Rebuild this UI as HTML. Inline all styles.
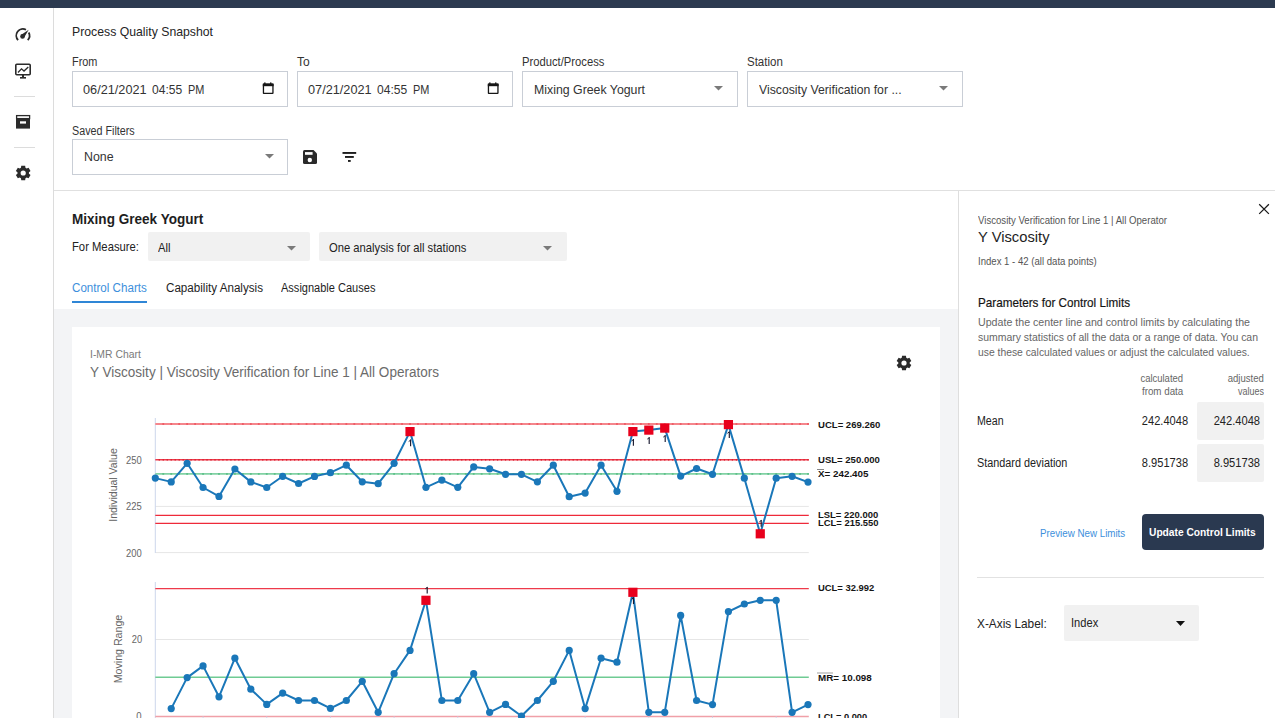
<!DOCTYPE html>
<html><head><meta charset="utf-8"><style>
html,body{margin:0;padding:0;width:1275px;height:718px;overflow:hidden;background:#fff;}
body{position:relative;font-family:"Liberation Sans",sans-serif;}
.t{position:absolute;white-space:nowrap;}
.r{position:absolute;}
svg{position:absolute;left:0;top:0;}
</style></head><body>
<div class="r" style="left:0px;top:0px;width:1275px;height:8px;background:#2c3a50;"></div>
<div class="r" style="left:53px;top:8px;width:1px;height:710px;background:#dcdcdc;"></div>
<div class="r" style="left:54px;top:190px;width:1221px;height:1px;background:#e0e0e0;"></div>
<div class="t" id="t0" style="left:72.00px;top:24.70px;font-size:13px;line-height:13px;color:#252525;transform:scaleX(0.9426512065183328);transform-origin:left top;">Process Quality Snapshot</div>
<div class="t" id="t1" style="left:72.00px;top:55.64px;font-size:12px;line-height:12px;color:#333;transform:scaleX(0.9071428571428571);transform-origin:left top;">From</div>
<div class="t" id="t2" style="left:297.00px;top:55.64px;font-size:12px;line-height:12px;color:#333;">To</div>
<div class="t" id="t3" style="left:522.00px;top:55.64px;font-size:12px;line-height:12px;color:#333;transform:scaleX(0.9358651286601598);transform-origin:left top;">Product/Process</div>
<div class="t" id="t4" style="left:747.00px;top:55.64px;font-size:12px;line-height:12px;color:#333;transform:scaleX(0.9582601421999163);transform-origin:left top;">Station</div>
<div class="r" style="left:72px;top:71px;width:216px;height:36px;background:#fff;box-sizing:border-box;border:1px solid #c9ced6;"></div>
<div class="r" style="left:297px;top:71px;width:216px;height:36px;background:#fff;box-sizing:border-box;border:1px solid #c9ced6;"></div>
<div class="r" style="left:522px;top:71px;width:216px;height:36px;background:#fff;box-sizing:border-box;border:1px solid #c9ced6;"></div>
<div class="r" style="left:747px;top:71px;width:216px;height:36px;background:#fff;box-sizing:border-box;border:1px solid #c9ced6;"></div>
<div class="t" id="t5" style="left:82.60px;top:82.70px;font-size:13px;line-height:13px;color:#333;transform:scaleX(0.9772869147659063);transform-origin:left top;">06/21/2021</div>
<div class="t" id="t6" style="left:152.20px;top:82.70px;font-size:13px;line-height:13px;color:#333;transform:scaleX(0.927892462794047);transform-origin:left top;">04:55</div>
<div class="t" id="t7" style="left:188.00px;top:82.70px;font-size:13px;line-height:13px;color:#333;transform:scaleX(0.8410256410256409);transform-origin:left top;">PM</div>
<div class="t" id="t8" style="left:307.60px;top:82.70px;font-size:13px;line-height:13px;color:#333;transform:scaleX(0.9772869147659063);transform-origin:left top;">07/21/2021</div>
<div class="t" id="t9" style="left:377.20px;top:82.70px;font-size:13px;line-height:13px;color:#333;transform:scaleX(0.927892462794047);transform-origin:left top;">04:55</div>
<div class="t" id="t10" style="left:413.00px;top:82.70px;font-size:13px;line-height:13px;color:#333;transform:scaleX(0.8410256410256409);transform-origin:left top;">PM</div>
<div class="t" id="t11" style="left:534.00px;top:82.70px;font-size:13px;line-height:13px;color:#333;transform:scaleX(0.9480848792206059);transform-origin:left top;">Mixing Greek Yogurt</div>
<div class="t" id="t12" style="left:759.00px;top:82.70px;font-size:13px;line-height:13px;color:#333;transform:scaleX(0.9412541254125412);transform-origin:left top;">Viscosity Verification for ...</div>
<svg width="14" height="14" style="left:262px;top:81px" viewBox="0 0 14 14"><rect x="1.45" y="3.25" width="9.5" height="9.05" rx="0.4" fill="none" stroke="#161616" stroke-width="1.3"/><rect x="0.8" y="2.6" width="10.8" height="2.6" fill="#161616"/><rect x="2.2" y="1.4" width="1.3" height="1.6" fill="#161616"/><rect x="8.1" y="1.4" width="1.3" height="1.6" fill="#161616"/></svg>
<svg width="14" height="14" style="left:487px;top:81px" viewBox="0 0 14 14"><rect x="1.45" y="3.25" width="9.5" height="9.05" rx="0.4" fill="none" stroke="#161616" stroke-width="1.3"/><rect x="0.8" y="2.6" width="10.8" height="2.6" fill="#161616"/><rect x="2.2" y="1.4" width="1.3" height="1.6" fill="#161616"/><rect x="8.1" y="1.4" width="1.3" height="1.6" fill="#161616"/></svg>
<svg width="9" height="5.5" style="left:714px;top:86px"><path d="M0 0 L9 0 L4.5 4.5 Z" fill="#7a7a7a"/></svg>
<svg width="9" height="5.5" style="left:939px;top:86px"><path d="M0 0 L9 0 L4.5 4.5 Z" fill="#7a7a7a"/></svg>
<div class="t" id="t13" style="left:72.00px;top:124.84px;font-size:12px;line-height:12px;color:#333;transform:scaleX(0.8953145917001339);transform-origin:left top;">Saved Filters</div>
<div class="r" style="left:72px;top:139px;width:216px;height:36px;background:#fff;box-sizing:border-box;border:1px solid #c9ced6;"></div>
<div class="t" id="t14" style="left:84.00px;top:150.40px;font-size:13px;line-height:13px;color:#333;transform:scaleX(0.9524384112619407);transform-origin:left top;">None</div>
<svg width="9" height="5.5" style="left:264.5px;top:154px"><path d="M0 0 L9 0 L4.5 4.5 Z" fill="#7a7a7a"/></svg>
<svg width="16" height="16" style="left:302px;top:149px" viewBox="0 0 16 16"><path d="M1 2.5 Q1 1 2.5 1 H11.5 L15 4.5 V13.5 Q15 15 13.5 15 H2.5 Q1 15 1 13.5 Z" fill="#2a2a2a"/><rect x="3" y="3.1" width="7.6" height="2.7" fill="#fff"/><circle cx="7.8" cy="11" r="2.2" fill="#fff"/></svg>
<svg width="16" height="14" style="left:341px;top:151px" viewBox="0 0 16 14"><rect x="1.5" y="1" width="13.7" height="1.9" fill="#1e1e1e"/><rect x="4" y="5" width="8.8" height="1.9" fill="#1e1e1e"/><rect x="7" y="9" width="2.7" height="1.9" fill="#1e1e1e"/></svg>
<svg width="54" height="182" style="left:0;top:8px" viewBox="0 8 54 182"><path d="M18.07 40.10 A6.6 6.6 0 0 1 26.00 29.77 M28.73 32.50 A6.6 6.6 0 0 1 27.73 40.10" fill="none" stroke="#2b2b2b" stroke-width="1.8"/><path d="M24.01 37.82 L28.70 29.80 L20.99 34.98 Z" fill="#2b2b2b"/><circle cx="22.5" cy="36.4" r="2.3" fill="#2b2b2b"/><rect x="15.8" y="64.2" width="14.4" height="10.6" rx="1" fill="none" stroke="#2b2b2b" stroke-width="1.6"/><polyline points="18,72.5 21.5,68.8 24,71 28.3,67" fill="none" stroke="#2b2b2b" stroke-width="1.3"/><rect x="22" y="75" width="2" height="2.5" fill="#2b2b2b"/><rect x="20" y="77" width="6" height="1.6" fill="#2b2b2b"/><rect x="14" y="96" width="21" height="1" fill="#dcdcdc"/><rect x="14" y="147" width="21" height="1" fill="#dcdcdc"/><rect x="16.6" y="115.6" width="13" height="3" fill="none" stroke="#2b2b2b" stroke-width="1.3"/><rect x="16" y="119" width="14" height="9.6" fill="#2b2b2b"/><rect x="20" y="121.3" width="6" height="2.3" fill="#fff"/></svg>
<svg width="54" height="30" style="left:0;top:158px" viewBox="0 158 54 30"><path d="M30.54,174.98 L28.58,178.36 L26.68,177.61 L25.45,178.32 L25.15,180.34 L21.25,180.34 L20.95,178.32 L19.72,177.61 L17.82,178.36 L15.86,174.98 L17.47,173.71 L17.47,172.29 L15.86,171.02 L17.82,167.64 L19.72,168.39 L20.95,167.68 L21.25,165.66 L25.15,165.66 L25.45,167.68 L26.68,168.39 L28.58,167.64 L30.54,171.02 L28.93,172.29 L28.93,173.71 Z" fill="#2b2b2b"/><circle cx="23.2" cy="173" r="2.6" fill="#fff"/></svg>
<div class="r" style="left:54px;top:309px;width:904px;height:409px;background:#f3f4f6;"></div>
<div class="r" style="left:72px;top:327px;width:868px;height:391px;background:#fff;"></div>
<div class="t" id="t15" style="left:72.00px;top:211.95px;font-size:14px;line-height:14px;color:#1e1e1e;font-weight:700;transform:scaleX(0.9681105990783411);transform-origin:left top;">Mixing Greek Yogurt</div>
<div class="t" id="t16" style="left:72.00px;top:240.00px;font-size:13px;line-height:13px;color:#222;transform:scaleX(0.8653193209377527);transform-origin:left top;">For Measure:</div>
<div class="r" style="left:148px;top:232px;width:162px;height:29px;background:#f1f1f1;border-radius:2px;"></div>
<div class="t" id="t17" style="left:157.60px;top:241.00px;font-size:13px;line-height:13px;color:#222;transform:scaleX(0.8648648648648649);transform-origin:left top;">All</div>
<svg width="9" height="5.5" style="left:287px;top:246px"><path d="M0 0 L9 0 L4.5 4.5 Z" fill="#7a7a7a"/></svg>
<div class="r" style="left:319px;top:232px;width:248px;height:29px;background:#f1f1f1;border-radius:2px;"></div>
<div class="t" id="t18" style="left:328.70px;top:240.80px;font-size:13px;line-height:13px;color:#222;transform:scaleX(0.8636917633182624);transform-origin:left top;">One analysis for all stations</div>
<svg width="9" height="5.5" style="left:543px;top:246px"><path d="M0 0 L9 0 L4.5 4.5 Z" fill="#7a7a7a"/></svg>
<div class="t" id="t19" style="left:72.00px;top:281.84px;font-size:12px;line-height:12px;color:#3d8fdc;transform:scaleX(0.9667205169628432);transform-origin:left top;">Control Charts</div>
<div class="t" id="t20" style="left:165.50px;top:281.84px;font-size:12px;line-height:12px;color:#1e1e1e;transform:scaleX(0.9693941286695815);transform-origin:left top;">Capability Analysis</div>
<div class="t" id="t21" style="left:281.00px;top:281.84px;font-size:12px;line-height:12px;color:#1e1e1e;transform:scaleX(0.918874524714829);transform-origin:left top;">Assignable Causes</div>
<div class="r" style="left:72px;top:301px;width:75px;height:2px;background:#2f86d6;"></div>
<div class="t" id="t22" style="left:89.80px;top:348.99px;font-size:11px;line-height:11px;color:#7a7a7a;transform:scaleX(0.9445671121441022);transform-origin:left top;">I-MR Chart</div>
<div class="t" id="t23" style="left:89.80px;top:365.25px;font-size:14px;line-height:14px;color:#6b6b6b;transform:scaleX(0.9658810810810811);transform-origin:left top;">Y Viscosity | Viscosity Verification for Line 1 | All Operators</div>
<svg width="20" height="20" style="left:894px;top:353px" viewBox="894 353 20 20"><path d="M911.34,364.98 L909.38,368.36 L907.48,367.61 L906.25,368.32 L905.95,370.34 L902.05,370.34 L901.75,368.32 L900.52,367.61 L898.62,368.36 L896.66,364.98 L898.27,363.71 L898.27,362.29 L896.66,361.02 L898.62,357.64 L900.52,358.39 L901.75,357.68 L902.05,355.66 L905.95,355.66 L906.25,357.68 L907.48,358.39 L909.38,357.64 L911.34,361.02 L909.73,362.29 L909.73,363.71 Z" fill="#2b2b2b"/><circle cx="904" cy="363" r="2.6" fill="#fff"/></svg>
<div class="r" style="left:958px;top:191px;width:1px;height:527px;background:#dedede;"></div>
<svg width="14" height="14" style="left:1257px;top:202px" viewBox="0 0 14 14"><path d="M2.2 2.2 L11.9 11.9 M11.9 2.2 L2.2 11.9" stroke="#1a1a1a" stroke-width="1.25"/></svg>
<div class="t" id="t24" style="left:977.60px;top:215.31px;font-size:10.5px;line-height:10.5px;color:#555;transform:scaleX(0.9165025003788453);transform-origin:left top;">Viscosity Verification for Line 1 | All Operator</div>
<div class="t" id="t25" style="left:977.60px;top:229.30px;font-size:15px;line-height:15px;color:#1e1e1e;transform:scaleX(0.9819742489270387);transform-origin:left top;">Y Viscosity</div>
<div class="t" id="t26" style="left:977.60px;top:256.09px;font-size:11px;line-height:11px;color:#555;transform:scaleX(0.8712272258508078);transform-origin:left top;">Index 1 - 42 (all data points)</div>
<div class="t" id="t27" style="left:977.60px;top:296.40px;font-size:13px;line-height:13px;color:#141414;transform:scaleX(0.8990757855822551);transform-origin:left top;-webkit-text-stroke:0.2px #141414;">Parameters for Control Limits</div>
<div class="t" id="t28" style="left:977.60px;top:317.27px;font-size:11.5px;line-height:11.5px;color:#666;transform:scaleX(0.9249734325185972);transform-origin:left top;">Update the center line and control limits by calculating the</div>
<div class="t" id="t29" style="left:977.60px;top:332.27px;font-size:11.5px;line-height:11.5px;color:#666;transform:scaleX(0.9087221095334685);transform-origin:left top;">summary statistics of all the data or a range of data. You can</div>
<div class="t" id="t30" style="left:977.60px;top:347.27px;font-size:11.5px;line-height:11.5px;color:#666;transform:scaleX(0.8985066914690228);transform-origin:left top;">use these calculated values or adjust the calculated values.</div>
<div class="t" id="t31" style="right:92.00px;top:374.24px;font-size:10px;line-height:10px;color:#666;transform:scaleX(0.9460097154753644);transform-origin:right top;">calculated</div>
<div class="t" id="t32" style="right:92.00px;top:386.94px;font-size:10px;line-height:10px;color:#666;transform:scaleX(0.9775147928994082);transform-origin:right top;">from data</div>
<div class="t" id="t33" style="right:11.00px;top:374.24px;font-size:10px;line-height:10px;color:#666;transform:scaleX(0.9547107438016529);transform-origin:right top;">adjusted</div>
<div class="t" id="t34" style="right:11.00px;top:386.94px;font-size:10px;line-height:10px;color:#666;transform:scaleX(0.8994594594594595);transform-origin:right top;">values</div>
<div class="r" style="left:1197px;top:402px;width:67px;height:38px;background:#f1f1f1;border-radius:2px;"></div>
<div class="r" style="left:1197px;top:444px;width:67px;height:38px;background:#f1f1f1;border-radius:2px;"></div>
<div class="t" id="t35" style="left:977.40px;top:415.14px;font-size:12px;line-height:12px;color:#222;transform:scaleX(0.8857440166493237);transform-origin:left top;">Mean</div>
<div class="t" id="t36" style="left:977.40px;top:457.24px;font-size:12px;line-height:12px;color:#222;transform:scaleX(0.9032943013270883);transform-origin:left top;">Standard deviation</div>
<div class="t" id="t37" style="right:87.00px;top:415.14px;font-size:12px;line-height:12px;color:#222;transform:scaleX(0.9228464419475656);transform-origin:right top;">242.4048</div>
<div class="t" id="t38" style="right:15.00px;top:415.14px;font-size:12px;line-height:12px;color:#222;transform:scaleX(0.9268414481897628);transform-origin:right top;">242.4048</div>
<div class="t" id="t39" style="right:87.00px;top:457.24px;font-size:12px;line-height:12px;color:#222;transform:scaleX(0.9228464419475656);transform-origin:right top;">8.951738</div>
<div class="t" id="t40" style="right:15.00px;top:457.24px;font-size:12px;line-height:12px;color:#222;transform:scaleX(0.9268414481897628);transform-origin:right top;">8.951738</div>
<div class="r" style="left:1142px;top:514px;width:122px;height:36px;background:#2a3950;border-radius:4px;"></div>
<div class="t" id="t41" style="left:1149.30px;top:527.29px;font-size:11px;line-height:11px;color:#fff;font-weight:700;transform:scaleX(0.9287093703250374);transform-origin:left top;">Update Control Limits</div>
<div class="t" id="t42" style="left:1040.40px;top:528.09px;font-size:11px;line-height:11px;color:#3d8fdc;transform:scaleX(0.8877889938130902);transform-origin:left top;">Preview New Limits</div>
<div class="r" style="left:977px;top:577px;width:287px;height:1px;background:#e2e2e2;"></div>
<div class="t" id="t43" style="left:977.00px;top:617.40px;font-size:13px;line-height:13px;color:#222;transform:scaleX(0.9099959200326397);transform-origin:left top;">X-Axis Label:</div>
<div class="r" style="left:1064px;top:605px;width:135px;height:36px;background:#f1f1f1;border-radius:2px;"></div>
<div class="t" id="t44" style="left:1071.00px;top:617.04px;font-size:12px;line-height:12px;color:#222;transform:scaleX(0.9264502394890899);transform-origin:left top;">Index</div>
<svg width="9" height="6" style="left:1176px;top:620.5px"><path d="M0 0 L9 0 L4.5 5 Z" fill="#111"/></svg>
<svg width="1275" height="718" viewBox="0 0 1275 718" style="left:0;top:0"><line x1="155.3" y1="506.4" x2="808.8" y2="506.4" stroke="#e6e6e6" stroke-width="1"/><line x1="155.3" y1="552.6" x2="808.8" y2="552.6" stroke="#e6e6e6" stroke-width="1"/><line x1="155.3" y1="418" x2="155.3" y2="553" stroke="#ccd6eb" stroke-width="1"/><line x1="155.3" y1="424" x2="808.8" y2="424" stroke="#f5868c" stroke-width="1.8"/><line x1="155.3" y1="459.8" x2="808.8" y2="459.8" stroke="#ee3a4a" stroke-width="1.4"/><line x1="155.3" y1="473.9" x2="808.8" y2="473.9" stroke="#82d2a4" stroke-width="1.6"/><line x1="155.3" y1="515.4" x2="808.8" y2="515.4" stroke="#ee2a3a" stroke-width="1.2"/><line x1="155.3" y1="523.4" x2="808.8" y2="523.4" stroke="#ee2a3a" stroke-width="1.2"/><rect x="162.36" y="423.10" width="1.8" height="1.8" fill="#ee5a64"/><rect x="170.32" y="423.10" width="1.8" height="1.8" fill="#ee5a64"/><rect x="178.28" y="423.10" width="1.8" height="1.8" fill="#ee5a64"/><rect x="186.24" y="423.10" width="1.8" height="1.8" fill="#ee5a64"/><rect x="194.20" y="423.10" width="1.8" height="1.8" fill="#ee5a64"/><rect x="202.16" y="423.10" width="1.8" height="1.8" fill="#ee5a64"/><rect x="210.12" y="423.10" width="1.8" height="1.8" fill="#ee5a64"/><rect x="218.08" y="423.10" width="1.8" height="1.8" fill="#ee5a64"/><rect x="226.04" y="423.10" width="1.8" height="1.8" fill="#ee5a64"/><rect x="234.00" y="423.10" width="1.8" height="1.8" fill="#ee5a64"/><rect x="241.96" y="423.10" width="1.8" height="1.8" fill="#ee5a64"/><rect x="249.92" y="423.10" width="1.8" height="1.8" fill="#ee5a64"/><rect x="257.88" y="423.10" width="1.8" height="1.8" fill="#ee5a64"/><rect x="265.84" y="423.10" width="1.8" height="1.8" fill="#ee5a64"/><rect x="273.80" y="423.10" width="1.8" height="1.8" fill="#ee5a64"/><rect x="281.76" y="423.10" width="1.8" height="1.8" fill="#ee5a64"/><rect x="289.72" y="423.10" width="1.8" height="1.8" fill="#ee5a64"/><rect x="297.68" y="423.10" width="1.8" height="1.8" fill="#ee5a64"/><rect x="305.64" y="423.10" width="1.8" height="1.8" fill="#ee5a64"/><rect x="313.60" y="423.10" width="1.8" height="1.8" fill="#ee5a64"/><rect x="321.56" y="423.10" width="1.8" height="1.8" fill="#ee5a64"/><rect x="329.52" y="423.10" width="1.8" height="1.8" fill="#ee5a64"/><rect x="337.48" y="423.10" width="1.8" height="1.8" fill="#ee5a64"/><rect x="345.44" y="423.10" width="1.8" height="1.8" fill="#ee5a64"/><rect x="353.40" y="423.10" width="1.8" height="1.8" fill="#ee5a64"/><rect x="361.36" y="423.10" width="1.8" height="1.8" fill="#ee5a64"/><rect x="369.32" y="423.10" width="1.8" height="1.8" fill="#ee5a64"/><rect x="377.28" y="423.10" width="1.8" height="1.8" fill="#ee5a64"/><rect x="385.24" y="423.10" width="1.8" height="1.8" fill="#ee5a64"/><rect x="393.20" y="423.10" width="1.8" height="1.8" fill="#ee5a64"/><rect x="401.16" y="423.10" width="1.8" height="1.8" fill="#ee5a64"/><rect x="409.12" y="423.10" width="1.8" height="1.8" fill="#ee5a64"/><rect x="417.08" y="423.10" width="1.8" height="1.8" fill="#ee5a64"/><rect x="425.04" y="423.10" width="1.8" height="1.8" fill="#ee5a64"/><rect x="433.00" y="423.10" width="1.8" height="1.8" fill="#ee5a64"/><rect x="440.96" y="423.10" width="1.8" height="1.8" fill="#ee5a64"/><rect x="448.92" y="423.10" width="1.8" height="1.8" fill="#ee5a64"/><rect x="456.88" y="423.10" width="1.8" height="1.8" fill="#ee5a64"/><rect x="464.84" y="423.10" width="1.8" height="1.8" fill="#ee5a64"/><rect x="472.80" y="423.10" width="1.8" height="1.8" fill="#ee5a64"/><rect x="480.76" y="423.10" width="1.8" height="1.8" fill="#ee5a64"/><rect x="488.72" y="423.10" width="1.8" height="1.8" fill="#ee5a64"/><rect x="496.68" y="423.10" width="1.8" height="1.8" fill="#ee5a64"/><rect x="504.64" y="423.10" width="1.8" height="1.8" fill="#ee5a64"/><rect x="512.60" y="423.10" width="1.8" height="1.8" fill="#ee5a64"/><rect x="520.56" y="423.10" width="1.8" height="1.8" fill="#ee5a64"/><rect x="528.52" y="423.10" width="1.8" height="1.8" fill="#ee5a64"/><rect x="536.48" y="423.10" width="1.8" height="1.8" fill="#ee5a64"/><rect x="544.44" y="423.10" width="1.8" height="1.8" fill="#ee5a64"/><rect x="552.40" y="423.10" width="1.8" height="1.8" fill="#ee5a64"/><rect x="560.36" y="423.10" width="1.8" height="1.8" fill="#ee5a64"/><rect x="568.32" y="423.10" width="1.8" height="1.8" fill="#ee5a64"/><rect x="576.28" y="423.10" width="1.8" height="1.8" fill="#ee5a64"/><rect x="584.24" y="423.10" width="1.8" height="1.8" fill="#ee5a64"/><rect x="592.20" y="423.10" width="1.8" height="1.8" fill="#ee5a64"/><rect x="600.16" y="423.10" width="1.8" height="1.8" fill="#ee5a64"/><rect x="608.12" y="423.10" width="1.8" height="1.8" fill="#ee5a64"/><rect x="616.08" y="423.10" width="1.8" height="1.8" fill="#ee5a64"/><rect x="624.04" y="423.10" width="1.8" height="1.8" fill="#ee5a64"/><rect x="632.00" y="423.10" width="1.8" height="1.8" fill="#ee5a64"/><rect x="639.96" y="423.10" width="1.8" height="1.8" fill="#ee5a64"/><rect x="647.92" y="423.10" width="1.8" height="1.8" fill="#ee5a64"/><rect x="655.88" y="423.10" width="1.8" height="1.8" fill="#ee5a64"/><rect x="663.84" y="423.10" width="1.8" height="1.8" fill="#ee5a64"/><rect x="671.80" y="423.10" width="1.8" height="1.8" fill="#ee5a64"/><rect x="679.76" y="423.10" width="1.8" height="1.8" fill="#ee5a64"/><rect x="687.72" y="423.10" width="1.8" height="1.8" fill="#ee5a64"/><rect x="695.68" y="423.10" width="1.8" height="1.8" fill="#ee5a64"/><rect x="703.64" y="423.10" width="1.8" height="1.8" fill="#ee5a64"/><rect x="711.60" y="423.10" width="1.8" height="1.8" fill="#ee5a64"/><rect x="719.56" y="423.10" width="1.8" height="1.8" fill="#ee5a64"/><rect x="727.52" y="423.10" width="1.8" height="1.8" fill="#ee5a64"/><rect x="735.48" y="423.10" width="1.8" height="1.8" fill="#ee5a64"/><rect x="743.44" y="423.10" width="1.8" height="1.8" fill="#ee5a64"/><rect x="751.40" y="423.10" width="1.8" height="1.8" fill="#ee5a64"/><rect x="759.36" y="423.10" width="1.8" height="1.8" fill="#ee5a64"/><rect x="767.32" y="423.10" width="1.8" height="1.8" fill="#ee5a64"/><rect x="775.28" y="423.10" width="1.8" height="1.8" fill="#ee5a64"/><rect x="783.24" y="423.10" width="1.8" height="1.8" fill="#ee5a64"/><rect x="791.20" y="423.10" width="1.8" height="1.8" fill="#ee5a64"/><rect x="799.16" y="423.10" width="1.8" height="1.8" fill="#ee5a64"/><rect x="807.12" y="423.10" width="1.8" height="1.8" fill="#ee5a64"/><rect x="158.68" y="459.00" width="1.2" height="1.6" fill="#d82030"/><rect x="162.66" y="459.00" width="1.2" height="1.6" fill="#d82030"/><rect x="166.64" y="459.00" width="1.2" height="1.6" fill="#d82030"/><rect x="170.62" y="459.00" width="1.2" height="1.6" fill="#d82030"/><rect x="174.60" y="459.00" width="1.2" height="1.6" fill="#d82030"/><rect x="178.58" y="459.00" width="1.2" height="1.6" fill="#d82030"/><rect x="182.56" y="459.00" width="1.2" height="1.6" fill="#d82030"/><rect x="186.54" y="459.00" width="1.2" height="1.6" fill="#d82030"/><rect x="190.52" y="459.00" width="1.2" height="1.6" fill="#d82030"/><rect x="194.50" y="459.00" width="1.2" height="1.6" fill="#d82030"/><rect x="198.48" y="459.00" width="1.2" height="1.6" fill="#d82030"/><rect x="202.46" y="459.00" width="1.2" height="1.6" fill="#d82030"/><rect x="206.44" y="459.00" width="1.2" height="1.6" fill="#d82030"/><rect x="210.42" y="459.00" width="1.2" height="1.6" fill="#d82030"/><rect x="214.40" y="459.00" width="1.2" height="1.6" fill="#d82030"/><rect x="218.38" y="459.00" width="1.2" height="1.6" fill="#d82030"/><rect x="222.36" y="459.00" width="1.2" height="1.6" fill="#d82030"/><rect x="226.34" y="459.00" width="1.2" height="1.6" fill="#d82030"/><rect x="230.32" y="459.00" width="1.2" height="1.6" fill="#d82030"/><rect x="234.30" y="459.00" width="1.2" height="1.6" fill="#d82030"/><rect x="238.28" y="459.00" width="1.2" height="1.6" fill="#d82030"/><rect x="242.26" y="459.00" width="1.2" height="1.6" fill="#d82030"/><rect x="246.24" y="459.00" width="1.2" height="1.6" fill="#d82030"/><rect x="250.22" y="459.00" width="1.2" height="1.6" fill="#d82030"/><rect x="254.20" y="459.00" width="1.2" height="1.6" fill="#d82030"/><rect x="258.18" y="459.00" width="1.2" height="1.6" fill="#d82030"/><rect x="262.16" y="459.00" width="1.2" height="1.6" fill="#d82030"/><rect x="266.14" y="459.00" width="1.2" height="1.6" fill="#d82030"/><rect x="270.12" y="459.00" width="1.2" height="1.6" fill="#d82030"/><rect x="274.10" y="459.00" width="1.2" height="1.6" fill="#d82030"/><rect x="278.08" y="459.00" width="1.2" height="1.6" fill="#d82030"/><rect x="282.06" y="459.00" width="1.2" height="1.6" fill="#d82030"/><rect x="286.04" y="459.00" width="1.2" height="1.6" fill="#d82030"/><rect x="290.02" y="459.00" width="1.2" height="1.6" fill="#d82030"/><rect x="294.00" y="459.00" width="1.2" height="1.6" fill="#d82030"/><rect x="297.98" y="459.00" width="1.2" height="1.6" fill="#d82030"/><rect x="301.96" y="459.00" width="1.2" height="1.6" fill="#d82030"/><rect x="305.94" y="459.00" width="1.2" height="1.6" fill="#d82030"/><rect x="309.92" y="459.00" width="1.2" height="1.6" fill="#d82030"/><rect x="313.90" y="459.00" width="1.2" height="1.6" fill="#d82030"/><rect x="317.88" y="459.00" width="1.2" height="1.6" fill="#d82030"/><rect x="321.86" y="459.00" width="1.2" height="1.6" fill="#d82030"/><rect x="325.84" y="459.00" width="1.2" height="1.6" fill="#d82030"/><rect x="329.82" y="459.00" width="1.2" height="1.6" fill="#d82030"/><rect x="333.80" y="459.00" width="1.2" height="1.6" fill="#d82030"/><rect x="337.78" y="459.00" width="1.2" height="1.6" fill="#d82030"/><rect x="341.76" y="459.00" width="1.2" height="1.6" fill="#d82030"/><rect x="345.74" y="459.00" width="1.2" height="1.6" fill="#d82030"/><rect x="349.72" y="459.00" width="1.2" height="1.6" fill="#d82030"/><rect x="353.70" y="459.00" width="1.2" height="1.6" fill="#d82030"/><rect x="357.68" y="459.00" width="1.2" height="1.6" fill="#d82030"/><rect x="361.66" y="459.00" width="1.2" height="1.6" fill="#d82030"/><rect x="365.64" y="459.00" width="1.2" height="1.6" fill="#d82030"/><rect x="369.62" y="459.00" width="1.2" height="1.6" fill="#d82030"/><rect x="373.60" y="459.00" width="1.2" height="1.6" fill="#d82030"/><rect x="377.58" y="459.00" width="1.2" height="1.6" fill="#d82030"/><rect x="381.56" y="459.00" width="1.2" height="1.6" fill="#d82030"/><rect x="385.54" y="459.00" width="1.2" height="1.6" fill="#d82030"/><rect x="389.52" y="459.00" width="1.2" height="1.6" fill="#d82030"/><rect x="393.50" y="459.00" width="1.2" height="1.6" fill="#d82030"/><rect x="397.48" y="459.00" width="1.2" height="1.6" fill="#d82030"/><rect x="401.46" y="459.00" width="1.2" height="1.6" fill="#d82030"/><rect x="405.44" y="459.00" width="1.2" height="1.6" fill="#d82030"/><rect x="409.42" y="459.00" width="1.2" height="1.6" fill="#d82030"/><rect x="413.40" y="459.00" width="1.2" height="1.6" fill="#d82030"/><rect x="417.38" y="459.00" width="1.2" height="1.6" fill="#d82030"/><rect x="421.36" y="459.00" width="1.2" height="1.6" fill="#d82030"/><rect x="425.34" y="459.00" width="1.2" height="1.6" fill="#d82030"/><rect x="429.32" y="459.00" width="1.2" height="1.6" fill="#d82030"/><rect x="433.30" y="459.00" width="1.2" height="1.6" fill="#d82030"/><rect x="437.28" y="459.00" width="1.2" height="1.6" fill="#d82030"/><rect x="441.26" y="459.00" width="1.2" height="1.6" fill="#d82030"/><rect x="445.24" y="459.00" width="1.2" height="1.6" fill="#d82030"/><rect x="449.22" y="459.00" width="1.2" height="1.6" fill="#d82030"/><rect x="453.20" y="459.00" width="1.2" height="1.6" fill="#d82030"/><rect x="457.18" y="459.00" width="1.2" height="1.6" fill="#d82030"/><rect x="461.16" y="459.00" width="1.2" height="1.6" fill="#d82030"/><rect x="465.14" y="459.00" width="1.2" height="1.6" fill="#d82030"/><rect x="469.12" y="459.00" width="1.2" height="1.6" fill="#d82030"/><rect x="473.10" y="459.00" width="1.2" height="1.6" fill="#d82030"/><rect x="477.08" y="459.00" width="1.2" height="1.6" fill="#d82030"/><rect x="481.06" y="459.00" width="1.2" height="1.6" fill="#d82030"/><rect x="485.04" y="459.00" width="1.2" height="1.6" fill="#d82030"/><rect x="489.02" y="459.00" width="1.2" height="1.6" fill="#d82030"/><rect x="493.00" y="459.00" width="1.2" height="1.6" fill="#d82030"/><rect x="496.98" y="459.00" width="1.2" height="1.6" fill="#d82030"/><rect x="500.96" y="459.00" width="1.2" height="1.6" fill="#d82030"/><rect x="504.94" y="459.00" width="1.2" height="1.6" fill="#d82030"/><rect x="508.92" y="459.00" width="1.2" height="1.6" fill="#d82030"/><rect x="512.90" y="459.00" width="1.2" height="1.6" fill="#d82030"/><rect x="516.88" y="459.00" width="1.2" height="1.6" fill="#d82030"/><rect x="520.86" y="459.00" width="1.2" height="1.6" fill="#d82030"/><rect x="524.84" y="459.00" width="1.2" height="1.6" fill="#d82030"/><rect x="528.82" y="459.00" width="1.2" height="1.6" fill="#d82030"/><rect x="532.80" y="459.00" width="1.2" height="1.6" fill="#d82030"/><rect x="536.78" y="459.00" width="1.2" height="1.6" fill="#d82030"/><rect x="540.76" y="459.00" width="1.2" height="1.6" fill="#d82030"/><rect x="544.74" y="459.00" width="1.2" height="1.6" fill="#d82030"/><rect x="548.72" y="459.00" width="1.2" height="1.6" fill="#d82030"/><rect x="552.70" y="459.00" width="1.2" height="1.6" fill="#d82030"/><rect x="556.68" y="459.00" width="1.2" height="1.6" fill="#d82030"/><rect x="560.66" y="459.00" width="1.2" height="1.6" fill="#d82030"/><rect x="564.64" y="459.00" width="1.2" height="1.6" fill="#d82030"/><rect x="568.62" y="459.00" width="1.2" height="1.6" fill="#d82030"/><rect x="572.60" y="459.00" width="1.2" height="1.6" fill="#d82030"/><rect x="576.58" y="459.00" width="1.2" height="1.6" fill="#d82030"/><rect x="580.56" y="459.00" width="1.2" height="1.6" fill="#d82030"/><rect x="584.54" y="459.00" width="1.2" height="1.6" fill="#d82030"/><rect x="588.52" y="459.00" width="1.2" height="1.6" fill="#d82030"/><rect x="592.50" y="459.00" width="1.2" height="1.6" fill="#d82030"/><rect x="596.48" y="459.00" width="1.2" height="1.6" fill="#d82030"/><rect x="600.46" y="459.00" width="1.2" height="1.6" fill="#d82030"/><rect x="604.44" y="459.00" width="1.2" height="1.6" fill="#d82030"/><rect x="608.42" y="459.00" width="1.2" height="1.6" fill="#d82030"/><rect x="612.40" y="459.00" width="1.2" height="1.6" fill="#d82030"/><rect x="616.38" y="459.00" width="1.2" height="1.6" fill="#d82030"/><rect x="620.36" y="459.00" width="1.2" height="1.6" fill="#d82030"/><rect x="624.34" y="459.00" width="1.2" height="1.6" fill="#d82030"/><rect x="628.32" y="459.00" width="1.2" height="1.6" fill="#d82030"/><rect x="632.30" y="459.00" width="1.2" height="1.6" fill="#d82030"/><rect x="636.28" y="459.00" width="1.2" height="1.6" fill="#d82030"/><rect x="640.26" y="459.00" width="1.2" height="1.6" fill="#d82030"/><rect x="644.24" y="459.00" width="1.2" height="1.6" fill="#d82030"/><rect x="648.22" y="459.00" width="1.2" height="1.6" fill="#d82030"/><rect x="652.20" y="459.00" width="1.2" height="1.6" fill="#d82030"/><rect x="656.18" y="459.00" width="1.2" height="1.6" fill="#d82030"/><rect x="660.16" y="459.00" width="1.2" height="1.6" fill="#d82030"/><rect x="664.14" y="459.00" width="1.2" height="1.6" fill="#d82030"/><rect x="668.12" y="459.00" width="1.2" height="1.6" fill="#d82030"/><rect x="672.10" y="459.00" width="1.2" height="1.6" fill="#d82030"/><rect x="676.08" y="459.00" width="1.2" height="1.6" fill="#d82030"/><rect x="680.06" y="459.00" width="1.2" height="1.6" fill="#d82030"/><rect x="684.04" y="459.00" width="1.2" height="1.6" fill="#d82030"/><rect x="688.02" y="459.00" width="1.2" height="1.6" fill="#d82030"/><rect x="692.00" y="459.00" width="1.2" height="1.6" fill="#d82030"/><rect x="695.98" y="459.00" width="1.2" height="1.6" fill="#d82030"/><rect x="699.96" y="459.00" width="1.2" height="1.6" fill="#d82030"/><rect x="703.94" y="459.00" width="1.2" height="1.6" fill="#d82030"/><rect x="707.92" y="459.00" width="1.2" height="1.6" fill="#d82030"/><rect x="711.90" y="459.00" width="1.2" height="1.6" fill="#d82030"/><rect x="715.88" y="459.00" width="1.2" height="1.6" fill="#d82030"/><rect x="719.86" y="459.00" width="1.2" height="1.6" fill="#d82030"/><rect x="723.84" y="459.00" width="1.2" height="1.6" fill="#d82030"/><rect x="727.82" y="459.00" width="1.2" height="1.6" fill="#d82030"/><rect x="731.80" y="459.00" width="1.2" height="1.6" fill="#d82030"/><rect x="735.78" y="459.00" width="1.2" height="1.6" fill="#d82030"/><rect x="739.76" y="459.00" width="1.2" height="1.6" fill="#d82030"/><rect x="743.74" y="459.00" width="1.2" height="1.6" fill="#d82030"/><rect x="747.72" y="459.00" width="1.2" height="1.6" fill="#d82030"/><rect x="751.70" y="459.00" width="1.2" height="1.6" fill="#d82030"/><rect x="755.68" y="459.00" width="1.2" height="1.6" fill="#d82030"/><rect x="759.66" y="459.00" width="1.2" height="1.6" fill="#d82030"/><rect x="763.64" y="459.00" width="1.2" height="1.6" fill="#d82030"/><rect x="767.62" y="459.00" width="1.2" height="1.6" fill="#d82030"/><rect x="771.60" y="459.00" width="1.2" height="1.6" fill="#d82030"/><rect x="775.58" y="459.00" width="1.2" height="1.6" fill="#d82030"/><rect x="779.56" y="459.00" width="1.2" height="1.6" fill="#d82030"/><rect x="783.54" y="459.00" width="1.2" height="1.6" fill="#d82030"/><rect x="787.52" y="459.00" width="1.2" height="1.6" fill="#d82030"/><rect x="791.50" y="459.00" width="1.2" height="1.6" fill="#d82030"/><rect x="795.48" y="459.00" width="1.2" height="1.6" fill="#d82030"/><rect x="799.46" y="459.00" width="1.2" height="1.6" fill="#d82030"/><rect x="803.44" y="459.00" width="1.2" height="1.6" fill="#d82030"/><rect x="807.42" y="459.00" width="1.2" height="1.6" fill="#d82030"/><rect x="162.36" y="473.00" width="1.8" height="1.8" fill="#5fc08a"/><rect x="170.32" y="473.00" width="1.8" height="1.8" fill="#5fc08a"/><rect x="178.28" y="473.00" width="1.8" height="1.8" fill="#5fc08a"/><rect x="186.24" y="473.00" width="1.8" height="1.8" fill="#5fc08a"/><rect x="194.20" y="473.00" width="1.8" height="1.8" fill="#5fc08a"/><rect x="202.16" y="473.00" width="1.8" height="1.8" fill="#5fc08a"/><rect x="210.12" y="473.00" width="1.8" height="1.8" fill="#5fc08a"/><rect x="218.08" y="473.00" width="1.8" height="1.8" fill="#5fc08a"/><rect x="226.04" y="473.00" width="1.8" height="1.8" fill="#5fc08a"/><rect x="234.00" y="473.00" width="1.8" height="1.8" fill="#5fc08a"/><rect x="241.96" y="473.00" width="1.8" height="1.8" fill="#5fc08a"/><rect x="249.92" y="473.00" width="1.8" height="1.8" fill="#5fc08a"/><rect x="257.88" y="473.00" width="1.8" height="1.8" fill="#5fc08a"/><rect x="265.84" y="473.00" width="1.8" height="1.8" fill="#5fc08a"/><rect x="273.80" y="473.00" width="1.8" height="1.8" fill="#5fc08a"/><rect x="281.76" y="473.00" width="1.8" height="1.8" fill="#5fc08a"/><rect x="289.72" y="473.00" width="1.8" height="1.8" fill="#5fc08a"/><rect x="297.68" y="473.00" width="1.8" height="1.8" fill="#5fc08a"/><rect x="305.64" y="473.00" width="1.8" height="1.8" fill="#5fc08a"/><rect x="313.60" y="473.00" width="1.8" height="1.8" fill="#5fc08a"/><rect x="321.56" y="473.00" width="1.8" height="1.8" fill="#5fc08a"/><rect x="329.52" y="473.00" width="1.8" height="1.8" fill="#5fc08a"/><rect x="337.48" y="473.00" width="1.8" height="1.8" fill="#5fc08a"/><rect x="345.44" y="473.00" width="1.8" height="1.8" fill="#5fc08a"/><rect x="353.40" y="473.00" width="1.8" height="1.8" fill="#5fc08a"/><rect x="361.36" y="473.00" width="1.8" height="1.8" fill="#5fc08a"/><rect x="369.32" y="473.00" width="1.8" height="1.8" fill="#5fc08a"/><rect x="377.28" y="473.00" width="1.8" height="1.8" fill="#5fc08a"/><rect x="385.24" y="473.00" width="1.8" height="1.8" fill="#5fc08a"/><rect x="393.20" y="473.00" width="1.8" height="1.8" fill="#5fc08a"/><rect x="401.16" y="473.00" width="1.8" height="1.8" fill="#5fc08a"/><rect x="409.12" y="473.00" width="1.8" height="1.8" fill="#5fc08a"/><rect x="417.08" y="473.00" width="1.8" height="1.8" fill="#5fc08a"/><rect x="425.04" y="473.00" width="1.8" height="1.8" fill="#5fc08a"/><rect x="433.00" y="473.00" width="1.8" height="1.8" fill="#5fc08a"/><rect x="440.96" y="473.00" width="1.8" height="1.8" fill="#5fc08a"/><rect x="448.92" y="473.00" width="1.8" height="1.8" fill="#5fc08a"/><rect x="456.88" y="473.00" width="1.8" height="1.8" fill="#5fc08a"/><rect x="464.84" y="473.00" width="1.8" height="1.8" fill="#5fc08a"/><rect x="472.80" y="473.00" width="1.8" height="1.8" fill="#5fc08a"/><rect x="480.76" y="473.00" width="1.8" height="1.8" fill="#5fc08a"/><rect x="488.72" y="473.00" width="1.8" height="1.8" fill="#5fc08a"/><rect x="496.68" y="473.00" width="1.8" height="1.8" fill="#5fc08a"/><rect x="504.64" y="473.00" width="1.8" height="1.8" fill="#5fc08a"/><rect x="512.60" y="473.00" width="1.8" height="1.8" fill="#5fc08a"/><rect x="520.56" y="473.00" width="1.8" height="1.8" fill="#5fc08a"/><rect x="528.52" y="473.00" width="1.8" height="1.8" fill="#5fc08a"/><rect x="536.48" y="473.00" width="1.8" height="1.8" fill="#5fc08a"/><rect x="544.44" y="473.00" width="1.8" height="1.8" fill="#5fc08a"/><rect x="552.40" y="473.00" width="1.8" height="1.8" fill="#5fc08a"/><rect x="560.36" y="473.00" width="1.8" height="1.8" fill="#5fc08a"/><rect x="568.32" y="473.00" width="1.8" height="1.8" fill="#5fc08a"/><rect x="576.28" y="473.00" width="1.8" height="1.8" fill="#5fc08a"/><rect x="584.24" y="473.00" width="1.8" height="1.8" fill="#5fc08a"/><rect x="592.20" y="473.00" width="1.8" height="1.8" fill="#5fc08a"/><rect x="600.16" y="473.00" width="1.8" height="1.8" fill="#5fc08a"/><rect x="608.12" y="473.00" width="1.8" height="1.8" fill="#5fc08a"/><rect x="616.08" y="473.00" width="1.8" height="1.8" fill="#5fc08a"/><rect x="624.04" y="473.00" width="1.8" height="1.8" fill="#5fc08a"/><rect x="632.00" y="473.00" width="1.8" height="1.8" fill="#5fc08a"/><rect x="639.96" y="473.00" width="1.8" height="1.8" fill="#5fc08a"/><rect x="647.92" y="473.00" width="1.8" height="1.8" fill="#5fc08a"/><rect x="655.88" y="473.00" width="1.8" height="1.8" fill="#5fc08a"/><rect x="663.84" y="473.00" width="1.8" height="1.8" fill="#5fc08a"/><rect x="671.80" y="473.00" width="1.8" height="1.8" fill="#5fc08a"/><rect x="679.76" y="473.00" width="1.8" height="1.8" fill="#5fc08a"/><rect x="687.72" y="473.00" width="1.8" height="1.8" fill="#5fc08a"/><rect x="695.68" y="473.00" width="1.8" height="1.8" fill="#5fc08a"/><rect x="703.64" y="473.00" width="1.8" height="1.8" fill="#5fc08a"/><rect x="711.60" y="473.00" width="1.8" height="1.8" fill="#5fc08a"/><rect x="719.56" y="473.00" width="1.8" height="1.8" fill="#5fc08a"/><rect x="727.52" y="473.00" width="1.8" height="1.8" fill="#5fc08a"/><rect x="735.48" y="473.00" width="1.8" height="1.8" fill="#5fc08a"/><rect x="743.44" y="473.00" width="1.8" height="1.8" fill="#5fc08a"/><rect x="751.40" y="473.00" width="1.8" height="1.8" fill="#5fc08a"/><rect x="759.36" y="473.00" width="1.8" height="1.8" fill="#5fc08a"/><rect x="767.32" y="473.00" width="1.8" height="1.8" fill="#5fc08a"/><rect x="775.28" y="473.00" width="1.8" height="1.8" fill="#5fc08a"/><rect x="783.24" y="473.00" width="1.8" height="1.8" fill="#5fc08a"/><rect x="791.20" y="473.00" width="1.8" height="1.8" fill="#5fc08a"/><rect x="799.16" y="473.00" width="1.8" height="1.8" fill="#5fc08a"/><rect x="807.12" y="473.00" width="1.8" height="1.8" fill="#5fc08a"/><polyline points="155.30,478.1 171.22,481.9 187.14,463.3 203.06,487.5 218.98,496.4 234.90,469 250.82,481.9 266.74,487.5 282.66,476.3 298.58,483.5 314.50,476.4 330.42,472.7 346.34,465.2 362.26,481.8 378.18,483.7 394.10,463.3 410.02,431.6 425.94,487.3 441.86,480.1 457.78,487.3 473.70,466.9 489.62,468.8 505.54,474.3 521.46,474.3 537.38,481.8 553.30,465.2 569.22,496.7 585.14,493.1 601.06,465.2 616.98,491.3 632.90,431.6 648.82,430.1 664.74,428.1 680.66,476.1 696.58,468.5 712.50,474.3 728.42,424.6 744.34,478.2 760.26,533.8 776.18,478.2 792.10,476.3 808.02,482.1" fill="none" stroke="#1a77b9" stroke-width="2" stroke-linejoin="round"/><circle cx="155.30" cy="478.1" r="3.6" fill="#1a77b9"/><circle cx="171.22" cy="481.9" r="3.6" fill="#1a77b9"/><circle cx="187.14" cy="463.3" r="3.6" fill="#1a77b9"/><circle cx="203.06" cy="487.5" r="3.6" fill="#1a77b9"/><circle cx="218.98" cy="496.4" r="3.6" fill="#1a77b9"/><circle cx="234.90" cy="469" r="3.6" fill="#1a77b9"/><circle cx="250.82" cy="481.9" r="3.6" fill="#1a77b9"/><circle cx="266.74" cy="487.5" r="3.6" fill="#1a77b9"/><circle cx="282.66" cy="476.3" r="3.6" fill="#1a77b9"/><circle cx="298.58" cy="483.5" r="3.6" fill="#1a77b9"/><circle cx="314.50" cy="476.4" r="3.6" fill="#1a77b9"/><circle cx="330.42" cy="472.7" r="3.6" fill="#1a77b9"/><circle cx="346.34" cy="465.2" r="3.6" fill="#1a77b9"/><circle cx="362.26" cy="481.8" r="3.6" fill="#1a77b9"/><circle cx="378.18" cy="483.7" r="3.6" fill="#1a77b9"/><circle cx="394.10" cy="463.3" r="3.6" fill="#1a77b9"/><rect x="405.42" y="427.0" width="9.2" height="9.2" fill="#e8001c"/><circle cx="425.94" cy="487.3" r="3.6" fill="#1a77b9"/><circle cx="441.86" cy="480.1" r="3.6" fill="#1a77b9"/><circle cx="457.78" cy="487.3" r="3.6" fill="#1a77b9"/><circle cx="473.70" cy="466.9" r="3.6" fill="#1a77b9"/><circle cx="489.62" cy="468.8" r="3.6" fill="#1a77b9"/><circle cx="505.54" cy="474.3" r="3.6" fill="#1a77b9"/><circle cx="521.46" cy="474.3" r="3.6" fill="#1a77b9"/><circle cx="537.38" cy="481.8" r="3.6" fill="#1a77b9"/><circle cx="553.30" cy="465.2" r="3.6" fill="#1a77b9"/><circle cx="569.22" cy="496.7" r="3.6" fill="#1a77b9"/><circle cx="585.14" cy="493.1" r="3.6" fill="#1a77b9"/><circle cx="601.06" cy="465.2" r="3.6" fill="#1a77b9"/><circle cx="616.98" cy="491.3" r="3.6" fill="#1a77b9"/><rect x="628.30" y="427.0" width="9.2" height="9.2" fill="#e8001c"/><rect x="644.22" y="425.5" width="9.2" height="9.2" fill="#e8001c"/><rect x="660.14" y="423.5" width="9.2" height="9.2" fill="#e8001c"/><circle cx="680.66" cy="476.1" r="3.6" fill="#1a77b9"/><circle cx="696.58" cy="468.5" r="3.6" fill="#1a77b9"/><circle cx="712.50" cy="474.3" r="3.6" fill="#1a77b9"/><rect x="723.82" y="420.0" width="9.2" height="9.2" fill="#e8001c"/><circle cx="744.34" cy="478.2" r="3.6" fill="#1a77b9"/><rect x="755.66" y="529.1999999999999" width="9.2" height="9.2" fill="#e8001c"/><circle cx="776.18" cy="478.2" r="3.6" fill="#1a77b9"/><circle cx="792.10" cy="476.3" r="3.6" fill="#1a77b9"/><circle cx="808.02" cy="482.1" r="3.6" fill="#1a77b9"/><line x1="155.3" y1="639.5" x2="808.8" y2="639.5" stroke="#e6e6e6" stroke-width="1"/><line x1="155.3" y1="582" x2="155.3" y2="718" stroke="#ccd6eb" stroke-width="1"/><line x1="155.3" y1="588.6" x2="808.8" y2="588.6" stroke="#ee3a4a" stroke-width="1.4"/><line x1="155.3" y1="677.3" x2="808.8" y2="677.3" stroke="#6fcb93" stroke-width="1.4"/><line x1="155.3" y1="716.5" x2="808.8" y2="716.5" stroke="#f0a0a8" stroke-width="1.4"/><rect x="202.56" y="716.5" width="1" height="2" fill="#ccd6eb"/><rect x="266.24" y="716.5" width="1" height="2" fill="#ccd6eb"/><rect x="329.92" y="716.5" width="1" height="2" fill="#ccd6eb"/><rect x="393.60" y="716.5" width="1" height="2" fill="#ccd6eb"/><rect x="457.28" y="716.5" width="1" height="2" fill="#ccd6eb"/><rect x="520.96" y="716.5" width="1" height="2" fill="#ccd6eb"/><rect x="584.64" y="716.5" width="1" height="2" fill="#ccd6eb"/><rect x="648.32" y="716.5" width="1" height="2" fill="#ccd6eb"/><rect x="712.00" y="716.5" width="1" height="2" fill="#ccd6eb"/><rect x="775.68" y="716.5" width="1" height="2" fill="#ccd6eb"/><polyline points="171.22,708.6 187.14,677.6 203.06,665.9 218.98,696.8 234.90,658.2 250.82,689.2 266.74,704.4 282.66,693.1 298.58,700.5 314.50,700.5 330.42,708.3 346.34,700.5 362.26,681.3 378.18,712.3 394.10,673.7 410.02,650.4 425.94,600.3 441.86,700.5 457.78,700.5 473.70,673.7 489.62,712.3 505.54,704.4 521.46,716 537.38,700.5 553.30,681.3 569.22,650.4 585.14,708.6 601.06,658.2 616.98,662.2 632.90,592.3 648.82,712.3 664.74,712.3 680.66,615.4 696.58,700.5 712.50,704.6 728.42,611.6 744.34,604 760.26,600.3 776.18,600.3 792.10,712.3 808.02,704.6" fill="none" stroke="#1a77b9" stroke-width="2" stroke-linejoin="round"/><circle cx="171.22" cy="708.6" r="3.6" fill="#1a77b9"/><circle cx="187.14" cy="677.6" r="3.6" fill="#1a77b9"/><circle cx="203.06" cy="665.9" r="3.6" fill="#1a77b9"/><circle cx="218.98" cy="696.8" r="3.6" fill="#1a77b9"/><circle cx="234.90" cy="658.2" r="3.6" fill="#1a77b9"/><circle cx="250.82" cy="689.2" r="3.6" fill="#1a77b9"/><circle cx="266.74" cy="704.4" r="3.6" fill="#1a77b9"/><circle cx="282.66" cy="693.1" r="3.6" fill="#1a77b9"/><circle cx="298.58" cy="700.5" r="3.6" fill="#1a77b9"/><circle cx="314.50" cy="700.5" r="3.6" fill="#1a77b9"/><circle cx="330.42" cy="708.3" r="3.6" fill="#1a77b9"/><circle cx="346.34" cy="700.5" r="3.6" fill="#1a77b9"/><circle cx="362.26" cy="681.3" r="3.6" fill="#1a77b9"/><circle cx="378.18" cy="712.3" r="3.6" fill="#1a77b9"/><circle cx="394.10" cy="673.7" r="3.6" fill="#1a77b9"/><circle cx="410.02" cy="650.4" r="3.6" fill="#1a77b9"/><rect x="421.34" y="595.6999999999999" width="9.2" height="9.2" fill="#e8001c"/><circle cx="441.86" cy="700.5" r="3.6" fill="#1a77b9"/><circle cx="457.78" cy="700.5" r="3.6" fill="#1a77b9"/><circle cx="473.70" cy="673.7" r="3.6" fill="#1a77b9"/><circle cx="489.62" cy="712.3" r="3.6" fill="#1a77b9"/><circle cx="505.54" cy="704.4" r="3.6" fill="#1a77b9"/><circle cx="521.46" cy="716" r="3.6" fill="#1a77b9"/><circle cx="537.38" cy="700.5" r="3.6" fill="#1a77b9"/><circle cx="553.30" cy="681.3" r="3.6" fill="#1a77b9"/><circle cx="569.22" cy="650.4" r="3.6" fill="#1a77b9"/><circle cx="585.14" cy="708.6" r="3.6" fill="#1a77b9"/><circle cx="601.06" cy="658.2" r="3.6" fill="#1a77b9"/><circle cx="616.98" cy="662.2" r="3.6" fill="#1a77b9"/><rect x="628.30" y="587.6999999999999" width="9.2" height="9.2" fill="#e8001c"/><circle cx="648.82" cy="712.3" r="3.6" fill="#1a77b9"/><circle cx="664.74" cy="712.3" r="3.6" fill="#1a77b9"/><circle cx="680.66" cy="615.4" r="3.6" fill="#1a77b9"/><circle cx="696.58" cy="700.5" r="3.6" fill="#1a77b9"/><circle cx="712.50" cy="704.6" r="3.6" fill="#1a77b9"/><circle cx="728.42" cy="611.6" r="3.6" fill="#1a77b9"/><circle cx="744.34" cy="604" r="3.6" fill="#1a77b9"/><circle cx="760.26" cy="600.3" r="3.6" fill="#1a77b9"/><circle cx="776.18" cy="600.3" r="3.6" fill="#1a77b9"/><circle cx="792.10" cy="712.3" r="3.6" fill="#1a77b9"/><circle cx="808.02" cy="704.6" r="3.6" fill="#1a77b9"/></svg>
<div class="t" id="t45" style="right:1133.00px;top:455.74px;font-size:10px;line-height:10px;color:#666;transform:scaleX(0.9408239700374531);transform-origin:right top;">250</div>
<div class="t" id="t46" style="right:1133.00px;top:502.14px;font-size:10px;line-height:10px;color:#666;transform:scaleX(0.9408239700374531);transform-origin:right top;">225</div>
<div class="t" id="t47" style="right:1133.00px;top:548.83px;font-size:10px;line-height:10px;color:#666;transform:scaleX(0.9408239700374531);transform-origin:right top;">200</div>
<div class="t" id="t48" style="right:1133.00px;top:635.24px;font-size:10px;line-height:10px;color:#666;transform:scaleX(0.9348314606741573);transform-origin:right top;">20</div>
<div class="t" id="t49" style="right:1133.00px;top:712.03px;font-size:10px;line-height:10px;color:#666;transform:scaleX(0.952808988764045);transform-origin:right top;">0</div>
<div class="t" id="t50" style="left:79.06px;top:480.20px;font-size:10px;line-height:10px;color:#666;transform-origin:34.94px 5.0px;transform:rotate(-90deg) scaleX(1.0519);">Individual Value</div>
<div class="t" id="t51" style="left:86.56px;top:644.20px;font-size:10px;line-height:10px;color:#666;transform-origin:32.24px 5.0px;transform:rotate(-90deg) scaleX(1.0623);">Moving Range</div>
<div class="t" id="t52" style="left:817.70px;top:419.50px;font-size:9.8px;line-height:9.8px;color:#151515;font-weight:700;transform:scaleX(0.975);transform-origin:left top;">UCL= 269.260</div>
<div class="t" id="t53" style="left:817.70px;top:455.30px;font-size:9.8px;line-height:9.8px;color:#151515;font-weight:700;transform:scaleX(0.9739473036197981);transform-origin:left top;">USL= 250.000</div>
<div class="t" id="t54" style="left:817.70px;top:469.30px;font-size:9.8px;line-height:9.8px;color:#151515;font-weight:700;transform:scaleX(1.0018598884066956);transform-origin:left top;">X= 242.405</div>
<div class="t" id="t55" style="left:817.70px;top:510.10px;font-size:9.8px;line-height:9.8px;color:#151515;font-weight:700;transform:scaleX(0.9651302605210421);transform-origin:left top;">LSL= 220.000</div>
<div class="t" id="t56" style="left:817.70px;top:518.40px;font-size:9.8px;line-height:9.8px;color:#151515;font-weight:700;transform:scaleX(0.9617486338797814);transform-origin:left top;">LCL= 215.550</div>
<div class="t" id="t57" style="left:817.70px;top:583.30px;font-size:9.8px;line-height:9.8px;color:#151515;font-weight:700;transform:scaleX(0.961622631438484);transform-origin:left top;">UCL= 32.992</div>
<div class="t" id="t58" style="left:817.70px;top:672.60px;font-size:9.8px;line-height:9.8px;color:#151515;font-weight:700;transform:scaleX(1.0026790914385555);transform-origin:left top;">MR= 10.098</div>
<div class="t" id="t59" style="left:817.70px;top:711.90px;font-size:9.8px;line-height:9.8px;color:#151515;font-weight:700;transform:scaleX(0.9439471312706519);transform-origin:left top;">LCL= 0.000</div>
<div class="r" style="left:817px;top:469px;width:7px;height:1px;background:#888;"></div>
<div class="r" style="left:817px;top:672px;width:16px;height:1.6px;background:#cfcfcf;"></div>
<svg width="1275" height="718" viewBox="0 0 1275 718" style="left:0;top:0"><path d="M410.60 439.60 V446.30" stroke="#1a1a30" stroke-width="1.15"/><path d="M410.80 440.00 L408.70 441.50" stroke="#1a1a30" stroke-width="0.95"/><path d="M633.40 439.10 V445.80" stroke="#1a1a30" stroke-width="1.15"/><path d="M633.60 439.50 L631.50 441.00" stroke="#1a1a30" stroke-width="0.95"/><path d="M649.20 437.20 V443.90" stroke="#1a1a30" stroke-width="1.15"/><path d="M649.40 437.60 L647.30 439.10" stroke="#1a1a30" stroke-width="0.95"/><path d="M665.20 435.20 V441.90" stroke="#1a1a30" stroke-width="1.15"/><path d="M665.40 435.60 L663.30 437.10" stroke="#1a1a30" stroke-width="0.95"/><path d="M729.30 431.40 V438.10" stroke="#1a1a30" stroke-width="1.15"/><path d="M729.50 431.80 L727.40 433.30" stroke="#1a1a30" stroke-width="0.95"/><path d="M761.20 520.00 V526.70" stroke="#1a1a30" stroke-width="1.15"/><path d="M761.40 520.40 L759.30 521.90" stroke="#1a1a30" stroke-width="0.95"/><path d="M427.20 586.90 V593.60" stroke="#1a1a30" stroke-width="1.15"/><path d="M427.40 587.30 L425.30 588.80" stroke="#1a1a30" stroke-width="0.95"/><path d="M633.50 597.30 V604.00" stroke="#1a1a30" stroke-width="1.15"/><path d="M633.70 597.70 L631.60 599.20" stroke="#1a1a30" stroke-width="0.95"/></svg>
</body></html>
